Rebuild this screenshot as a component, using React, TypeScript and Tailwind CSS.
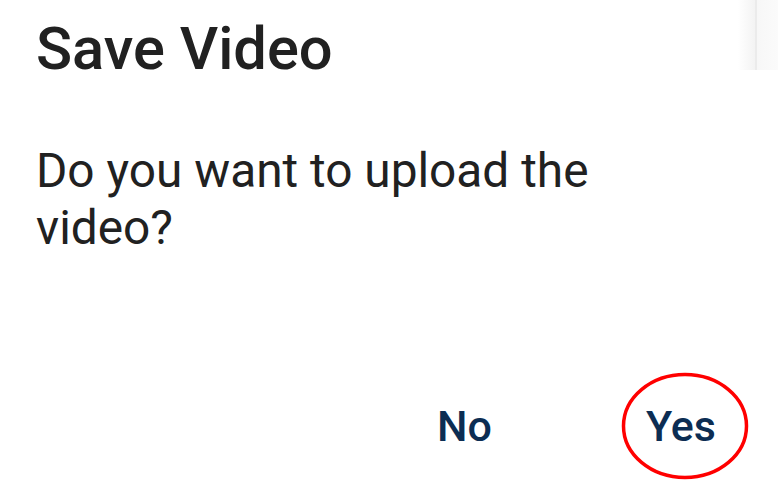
export default function App() {
  return (
    <div
      className="relative w-[778px] h-[504px] overflow-hidden bg-white"
      style={{ fontFamily: "Roboto, 'Noto Sans', sans-serif" }}
    >
      {/* faint edge of the screen behind the dialog */}
      <div className="absolute right-0 top-0 flex h-[70px] w-[40px]">
        <div className="w-[17px] bg-gradient-to-r from-white to-[#f3f3f3]" />
        <div className="w-[2px] bg-[#ebebeb]" />
        <div className="flex-1 bg-gradient-to-r from-[#f7f7f7] to-[#fbfbfb]" />
      </div>

      <div className="flex h-full flex-col pl-[36px] pr-[30px]">
        <h1 className="mt-[14px] text-[59.6px] font-medium leading-[70px] text-[#212121]">Save Video</h1>
        <p className="mt-[59px] w-[600px] text-[47.8px] leading-[57px] text-[#212121]">
          Do you want to upload the video?
        </p>
        <div className="mt-auto mb-[54px] flex items-center justify-end gap-[154px] pr-[32px]">
          <button className="text-[43px] font-medium leading-[48px] text-[#0c2d53]">No</button>
          <div className="relative">
            <button className="text-[43px] font-medium leading-[48px] text-[#0c2d53]">Yes</button>
            <svg className="absolute left-[-25px] top-[-30px]" width="128" height="108" viewBox="0 0 128 108">
              <ellipse cx="64" cy="54" rx="61.5" ry="51.5" fill="none" stroke="#ff0000" strokeWidth="3.5" />
            </svg>
          </div>
        </div>
      </div>
    </div>
  );
}
